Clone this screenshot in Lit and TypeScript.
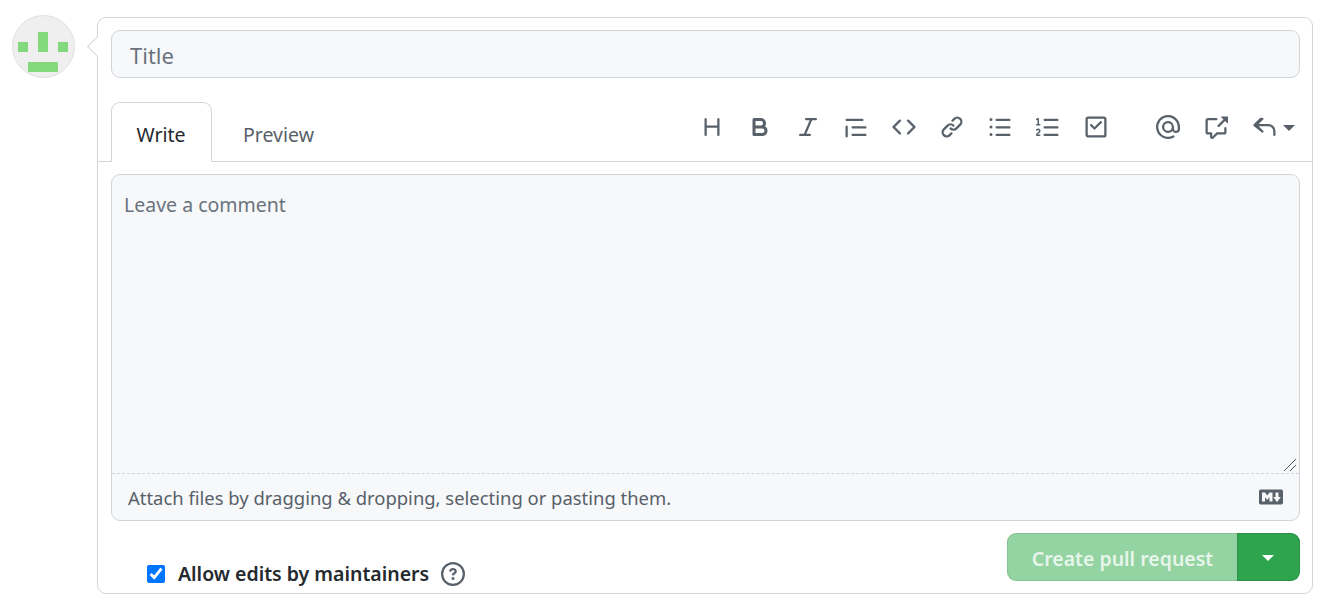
import { LitElement, html, css, svg } from "lit";
import { customElement } from "lit/decorators.js";

const P: Record<string, string> = {
  heading: "M3.75 2a.75.75 0 01.75.75V7h7V2.75a.75.75 0 011.5 0v10.5a.75.75 0 01-1.5 0V8.5h-7v4.75a.75.75 0 01-1.5 0V2.75A.75.75 0 013.75 2z",
  bold: "M4 2a1 1 0 00-1 1v10a1 1 0 001 1h5.5a3.5 3.5 0 001.852-6.47A3.5 3.5 0 008.5 2H4zm4.5 5a1.5 1.5 0 100-3H5v3h3.5zM5 9v3h4.5a1.5 1.5 0 000-3H5z",
  italic: "M6 2.75A.75.75 0 016.75 2h6.5a.75.75 0 010 1.5h-2.505l-3.858 9H9.25a.75.75 0 010 1.5h-6.5a.75.75 0 010-1.5h2.505l3.858-9H6.75A.75.75 0 016 2.75z",
  quote: "M1.75 2.5a.75.75 0 000 1.5h10.5a.75.75 0 000-1.5H1.75zm4 5a.75.75 0 000 1.5h8.5a.75.75 0 000-1.5h-8.5zm0 5a.75.75 0 000 1.5h8.5a.75.75 0 000-1.5h-8.5zM2.5 7.75a.75.75 0 00-1.5 0v6.5a.75.75 0 001.5 0v-6.5z",
  code: "M4.72 3.22a.75.75 0 011.06 1.06L2.06 8l3.72 3.72a.75.75 0 11-1.06 1.06L.47 8.53a.75.75 0 010-1.06l4.25-4.25zm6.56 0a.75.75 0 10-1.06 1.06L13.94 8l-3.72 3.72a.75.75 0 101.06 1.06l4.25-4.25a.75.75 0 000-1.06l-4.25-4.25z",
  link: "M7.775 3.275a.75.75 0 001.06 1.06l1.25-1.25a2 2 0 112.83 2.83l-2.5 2.5a2 2 0 01-2.83 0 .75.75 0 00-1.06 1.06 3.5 3.5 0 004.95 0l2.5-2.5a3.5 3.5 0 00-4.95-4.95l-1.25 1.25zm-4.69 9.64a2 2 0 010-2.83l2.5-2.5a2 2 0 012.83 0 .75.75 0 001.06-1.06 3.5 3.5 0 00-4.95 0l-2.5 2.5a3.5 3.5 0 004.95 4.95l1.25-1.25a.75.75 0 00-1.06-1.06l-1.25 1.25a2 2 0 01-2.83 0z",
  ul: "M2 4a1 1 0 100-2 1 1 0 000 2zm3.75-1.5a.75.75 0 000 1.5h8.5a.75.75 0 000-1.5h-8.5zm0 5a.75.75 0 000 1.5h8.5a.75.75 0 000-1.5h-8.5zm0 5a.75.75 0 000 1.5h8.5a.75.75 0 000-1.5h-8.5zM3 8a1 1 0 11-2 0 1 1 0 012 0zm-1 6a1 1 0 100-2 1 1 0 000 2z",
  ol: "M2.003 2.5a.5.5 0 00-.723-.447l-1.003.5a.5.5 0 00.446.895l.28-.14V6H.5a.5.5 0 000 1h2.006a.5.5 0 100-1h-.503V2.5zM5 3.25a.75.75 0 01.75-.75h8.5a.75.75 0 010 1.5h-8.5A.75.75 0 015 3.25zm0 5a.75.75 0 01.75-.75h8.5a.75.75 0 010 1.5h-8.5A.75.75 0 015 8.25zm0 5a.75.75 0 01.75-.75h8.5a.75.75 0 010 1.5h-8.5a.75.75 0 01-.75-.75zM.924 10.32l.003-.004a.851.851 0 01.144-.153A.66.66 0 011.5 10c.195 0 .306.068.374.146a.57.57 0 01.128.376c0 .453-.269.682-.8 1.078l-.035.025C.692 11.98 0 12.495 0 13.5a.5.5 0 00.5.5h2.003a.5.5 0 000-1H1.146c.132-.197.351-.372.654-.597l.047-.035c.47-.35 1.156-.858 1.156-1.845 0-.365-.118-.744-.377-1.038-.268-.303-.658-.484-1.126-.484-.48 0-.84.202-1.068.392a1.858 1.858 0 00-.348.384l-.007.011-.002.004-.001.002-.001.001a.5.5 0 00.851.525z",
  task: "M2.5 2.75a.25.25 0 01.25-.25h10.5a.25.25 0 01.25.25v10.5a.25.25 0 01-.25.25H2.75a.25.25 0 01-.25-.25V2.75zM2.75 1A1.75 1.75 0 001 2.75v10.5c0 .966.784 1.75 1.75 1.75h10.5A1.75 1.75 0 0015 13.25V2.75A1.75 1.75 0 0013.25 1H2.75zm9.03 4.28a.75.75 0 00-1.06-1.06L7 7.94 5.28 6.22a.75.75 0 00-1.06 1.06l2.25 2.25a.75.75 0 001.06 0l4.25-4.25z",
  mention: "M4.75 2.37a6.5 6.5 0 006.5 11.26.75.75 0 01.75 1.298 8 8 0 113.994-7.273.754.754 0 01.006.095v1.5a2.75 2.75 0 01-5.072 1.475A4 4 0 1112 8v1.25a1.25 1.25 0 002.5 0V7.867a6.5 6.5 0 00-9.75-5.496V2.37zM10.5 8a2.5 2.5 0 10-5 0 2.5 2.5 0 005 0z",
  xref: "M16 1.25v4.146a.25.25 0 01-.427.177L14.03 4.03l-3.75 3.75a.75.75 0 11-1.06-1.06l3.75-3.75-1.543-1.543A.25.25 0 0111.604 1h4.146a.25.25 0 01.25.25zM2.75 3.5a.25.25 0 00-.25.25v7.5c0 .138.112.25.25.25h2a.75.75 0 01.75.75v2.19l2.72-2.72a.75.75 0 01.53-.22h4.5a.25.25 0 00.25-.25v-2.5a.75.75 0 111.5 0v2.5A1.75 1.75 0 0113.25 13H9.06l-2.573 2.573A1.457 1.457 0 014 14.543V13H2.75A1.75 1.75 0 011 11.25v-7.5C1 2.784 1.784 2 2.75 2h5.5a.75.75 0 010 1.5h-5.5z",
  reply: "M6.78 1.97a.75.75 0 010 1.06L3.81 6h6.44A4.75 4.75 0 0115 10.75v2.5a.75.75 0 01-1.5 0v-2.5a3.25 3.25 0 00-3.25-3.25H3.81l2.97 2.97a.75.75 0 11-1.06 1.06L.47 7.28a.75.75 0 010-1.06l4.25-4.25a.75.75 0 011.06 0z",
  md: "M14.85 3H1.15C.52 3 0 3.52 0 4.15v7.69C0 12.48.52 13 1.15 13h13.69c.64 0 1.15-.52 1.15-1.15v-7.7C16 3.52 15.48 3 14.85 3zM9 11H7V8L5.5 9.92 4 8v3H2V5h2l1.5 2L7 5h2v6zm2.99.5L9.5 8H11V5h2v3h1.5l-2.51 3.5z",
  help: "M8 1.5a6.5 6.5 0 100 13 6.5 6.5 0 000-13zM0 8a8 8 0 1116 0A8 8 0 010 8zm9 3a1 1 0 11-2 0 1 1 0 012 0zM6.92 6.085c.081-.16.19-.299.34-.398.145-.097.371-.187.74-.187.28 0 .553.087.738.225A.613.613 0 019 6.25c0 .177-.04.264-.077.318a.956.956 0 01-.277.245c-.076.051-.158.1-.258.161l-.007.004a7.728 7.728 0 00-.313.195 2.416 2.416 0 00-.692.661.75.75 0 001.248.832.956.956 0 01.276-.245 6.3 6.3 0 01.26-.16l.006-.004c.093-.057.204-.123.313-.195.222-.149.487-.355.692-.662.214-.32.329-.702.329-1.15 0-.76-.36-1.348-.863-1.725A2.76 2.76 0 008 4c-.631 0-1.155.16-1.572.438-.413.276-.68.638-.849.977a.75.75 0 101.342.67z",
};

const icon = (name: string, size = 24) => html`<svg class="ic" width=${size} height=${size} viewBox="0 0 16 16" fill="currentColor">${svg`<path fill-rule="evenodd" d=${P[name]}></path>`}</svg>`;

@customElement("app-root")
export class AppRoot extends LitElement {
  static styles = css`
    :host { display: block; font-family: "Noto Sans", "Open Sans", sans-serif; color: #24292e; background: #fff; height: 601px; overflow: hidden; box-sizing: border-box; }
    .page { display: flex; align-items: flex-start; padding: 15px 14px 0 12px; }
    .avatar { flex: none; width: 63px; height: 63px; margin-right: 22px; display: block; }
    .box { position: relative; flex: 1; height: 577px; box-sizing: border-box; margin-top: 2px; border: 1px solid #d1d5da; border-radius: 9px; background: #fff; display: flex; flex-direction: column; }
    .caret { position: absolute; left: -8px; top: 21px; width: 15px; height: 15px; box-sizing: border-box; background: #fff; border-left: 1px solid #d1d5da; border-bottom: 1px solid #d1d5da; transform: rotate(45deg); }
    .title { margin: 12px 12px 0 13px; height: 48px; box-sizing: border-box; border: 1px solid #d1d5da; border-radius: 9px; background: #f6f8fa; display: flex; align-items: center; padding: 2px 0 0 18px; font-size: 22px; color: #6a737d; }
    .tabbar { margin-top: 24px; height: 60px; box-sizing: border-box; border-bottom: 1px solid #d1d5da; display: flex; padding-left: 13px; position: relative; }
    .tab { width: 101px; height: 60px; box-sizing: border-box; display: flex; align-items: center; justify-content: center; font-size: 19.5px; padding: 5px 1px 0 0; }
    .tab.on { border: 1px solid #d1d5da; border-bottom-color: #fff; border-radius: 9px 9px 0 0; background: #fff; }
    .tab.off { color: #586069; width: 134px; }
    .tools { position: absolute; left: 590px; top: 0; height: 50px; display: flex; align-items: center; color: #586069; }
    .tb { width: 48px; height: 24px; display: flex; align-items: center; justify-content: center; flex: none; }
    .tb.narrow { width: 47.5px; }
    .tb.reply { width: auto; margin-left: 13px; }
    .sep { width: 24px; flex: none; }
    .ic { display: block; flex: none; }
    .tri { width: 0; height: 0; border: 6px solid transparent; border-top-color: currentColor; border-bottom: 0; margin-top: 1px; }
    .reply .tri { margin-left: 6px; }
    .editor { margin: 12px 12px 0 13px; height: 347px; box-sizing: border-box; border: 1px solid #d1d5da; border-radius: 9px; background: #f6f8fa; display: flex; flex-direction: column; }
    .area { flex: 1; position: relative; padding: 15px 12px; font-size: 19.5px; line-height: 29px; color: #6a737d; }
    .grip { position: absolute; right: 2px; bottom: 1px; display: block; }
    .attach { height: 47px; box-sizing: border-box; border-top: 1px dashed #d1d5da; display: flex; align-items: center; justify-content: space-between; padding: 0 16px; font-size: 18.44px; color: #586069; }
    .attach span { padding-top: 1px; }
    .foot { margin: 12px 12px 0 13px; display: flex; justify-content: space-between; align-items: flex-end; }
    .check { display: flex; align-items: center; padding-left: 36px; font-size: 19.5px; font-weight: 600; height: 24px; margin-bottom: -5px; }
    .check input { margin: 0 13px 0 0; width: 18px; height: 18px; accent-color: #0075ff; }
    .check span { padding-bottom: 2px; }
    .check .ic { margin-left: 12px; color: #586069; }
    .split { display: flex; height: 48px; }
    .cta { width: 230px; box-sizing: border-box; background: #94d3a2; border: 1px solid rgba(27,31,35,.1); border-right: 0; border-radius: 9px 0 0 9px; display: flex; align-items: center; justify-content: center; padding-top: 2px; color: rgba(255,255,255,.8); font-size: 19.5px; font-weight: 600; }
    .drop { width: 63px; box-sizing: border-box; background: #2ea44f; border: 1px solid rgba(27,31,35,.15); border-radius: 0 9px 9px 0; display: flex; align-items: center; justify-content: center; padding-right: 2px; color: #fff; }
  `;

  render() {
    const a = ["heading", "bold", "italic", "quote", "code", "link", "ul"];
    return html`<div class="page">
      <svg class="avatar" viewBox="0 0 63 63">
        <circle cx="31.5" cy="31.5" r="31" fill="#efefef" stroke="#e0e0e0"></circle>
        <g fill="#83d97c">
          <rect x="6" y="27" width="10" height="10"></rect>
          <rect x="26" y="17" width="10" height="20"></rect>
          <rect x="46" y="27" width="10" height="10"></rect>
          <rect x="16" y="47" width="30" height="10"></rect>
        </g>
      </svg>
      <div class="box">
        <div class="caret"></div>
        <div class="title">Title</div>
        <div class="tabbar">
          <div class="tab on">Write</div>
          <div class="tab off">Preview</div>
          <div class="tools">
            ${a.map((n) => html`<div class="tb">${icon(n)}</div>`)}
            <div class="tb narrow">${icon("ol")}</div>
            <div class="tb">${icon("task")}</div>
            <div class="sep"></div>
            <div class="tb">${icon("mention")}</div>
            <div class="tb">${icon("xref")}</div>
            <div class="tb reply">${icon("reply")}<span class="tri"></span></div>
          </div>
        </div>
        <div class="editor">
          <div class="area">Leave a comment
            <svg class="grip" width="14" height="14" viewBox="0 0 14 14" stroke="#555" fill="none"><path d="M1 13 13 1M7 13l6-6"></path></svg>
          </div>
          <div class="attach"><span>Attach files by dragging &amp; dropping, selecting or pasting them.</span>${icon("md")}</div>
        </div>
        <div class="foot">
          <label class="check"><input type="checkbox" checked /><span>Allow edits by maintainers</span>${icon("help")}</label>
          <div class="split">
            <div class="cta">Create pull request</div>
            <div class="drop"><span class="tri"></span></div>
          </div>
        </div>
      </div>
    </div>`;
  }
}
